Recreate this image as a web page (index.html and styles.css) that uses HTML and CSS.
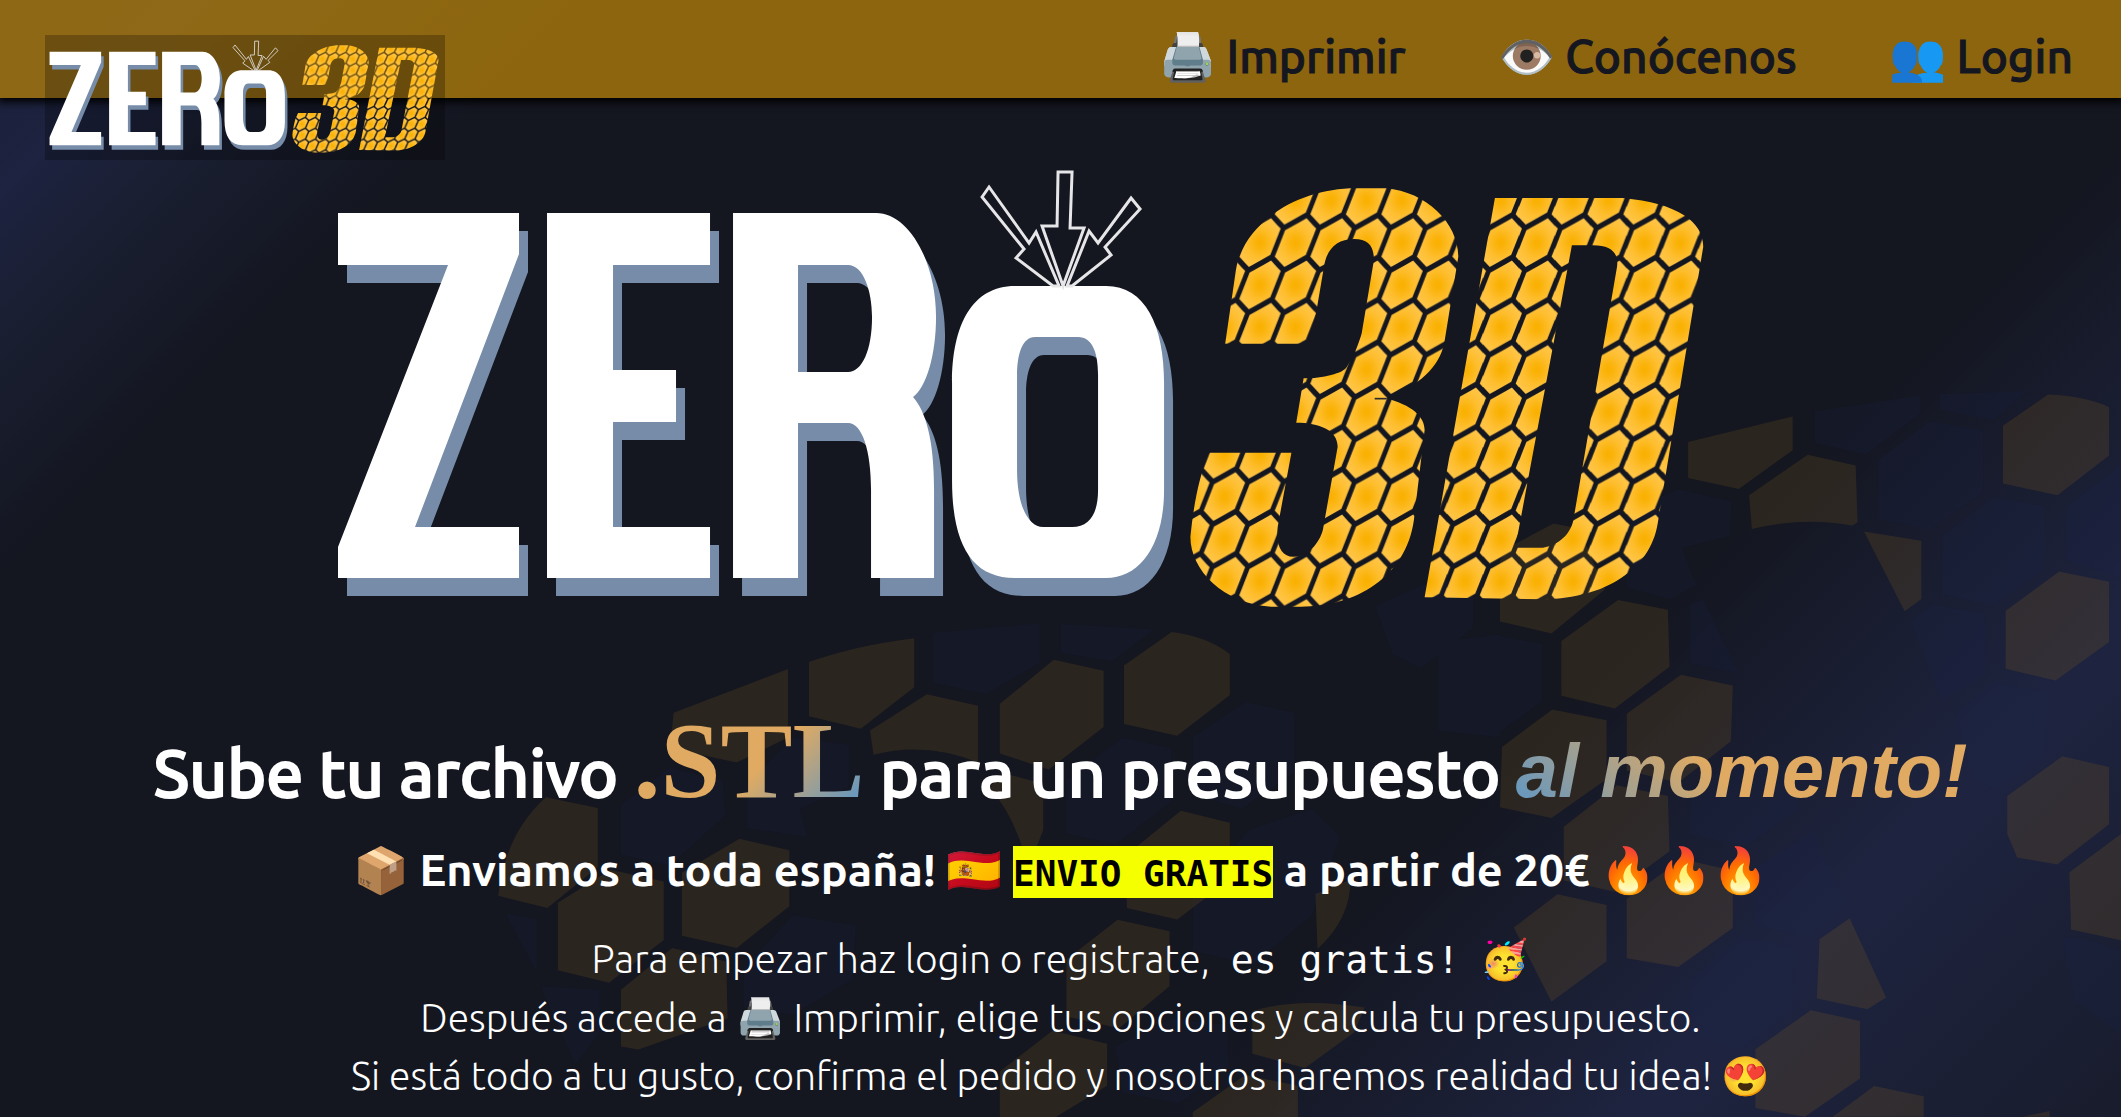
FILE: index.html
```html
<!DOCTYPE html>
<html lang="es">
<head>
<meta charset="utf-8">
<meta name="viewport" content="width=device-width, initial-scale=1">
<title>ZERo 3D</title>
<link rel="stylesheet" href="styles.css">
</head>
<body>
<svg class="backdrop" viewBox="0 0 2121 1117" preserveAspectRatio="xMidYMid slice" aria-hidden="true">
  <g class="cells-blue">
    <g transform="translate(1500 350) scale(.396 .489)">
      <path d="M795 125L1060 93V130L925 213L795 190ZM1110 90L1330 85L1245 142L1110 122ZM956 225L1085 145L1220 165V290L1085 368L956 345ZM1116 380L1245 300L1375 320V445L1245 522L1116 500ZM1430 320L1568 235V465L1430 430ZM320 330L450 285L585 310L580 380L460 405L495 480L430 510L320 485ZM480 520L515 510L600 660L480 640ZM0 585L105 600V720L0 780ZM1036 555L1090 520L1225 540V665L1115 715ZM1150 745L1250 680L1380 700V820L1245 900L1190 870ZM480 900L600 840L750 850V940L620 1015L480 990ZM645 1060L790 985L870 1135L780 1200L645 1175ZM480 1290L610 1200L740 1220V1350L610 1430L480 1400ZM1420 1200L1500 1210L1568 1230V1400L1450 1330Z"/>
    </g>
    <g transform="translate(400 560) scale(.7015 .3552)">
      <path d="M760 205L912 178V290L835 378L760 345ZM942 180L1075 195L1015 285L942 262ZM315 690L385 585L460 620L463 720L385 860L315 830ZM495 630L560 500L640 520V640L570 700L580 780L495 755ZM150 995L195 1010V1160ZM200 1200L285 1210V1330L250 1420ZM1130 500L1205 400L1275 430V600L1200 700L1130 660ZM950 620L1030 500L1100 530V680L1020 800L950 770ZM1130 950L1210 760L1300 700L1340 780L1300 1000L1215 1140L1130 1100ZM1390 130L1480 50L1530 90V190L1455 305L1415 265ZM1480 230L1568 210V500L1480 480ZM490 1150L560 1000L650 1030L645 1180L560 1280L490 1260ZM1020 1370L1100 1290L1180 1310V1430L1110 1530L1030 1500Z"/>
    </g>
  </g>
  <g class="cells-brown">
    <g transform="translate(1500 350) scale(.396 .489)">
      <path d="M475 188L739 136V205L603 284L475 262ZM629 297L777 214L898 236L903 352L890 359Q770 340 636 366ZM919 371L1064 390V509L1022 534ZM1270 155L1384 91Q1480 94 1538 117V216L1408 297L1270 273ZM1277 533L1412 453L1538 474V597L1403 676L1277 652ZM1281 912L1420 831L1538 853V970L1407 1052L1306 1038L1281 990ZM1438 1068L1568 990V1207L1442 1185ZM155 595L298 511L424 531L428 648L290 733L155 707ZM320 744L457 664L588 686L583 800L450 885L320 860ZM5 812L132 735L269 757V878L130 957L0 935ZM161 975L295 890L424 912L428 1025L290 1108L161 1085ZM320 1122L460 1041L588 1065V1182L450 1262L320 1244ZM35 1181L145 1113L269 1135V1250L130 1333ZM807 1205L883 1162L975 1324L928 1348L800 1326ZM645 1430L785 1350L909 1372V1490L770 1568L645 1550ZM840 1568L945 1505L1070 1526V1568ZM1320 1568L1388 1556V1568ZM30 400L135 355L200 365L265 490L130 580L0 555V430Z"/>
    </g>
    <g transform="translate(400 560) scale(.7015 .3552)">
      <path d="M390 430L553 307V500L480 570L385 530ZM583 287Q650 240 733 220V358L657 475L583 440ZM670 480L751 378L824 410V570Q750 510 675 548ZM855 405L932 281L1003 312V470L925 590L855 545ZM1032 297L1100 203Q1150 215 1183 265V380L1108 495L1032 462ZM208 668L282 698V865L210 980L140 945Q150 770 208 668ZM225 965L300 872L376 905V1070L298 1190L225 1155ZM402 880L484 785L555 817V975L480 1092L402 1058ZM388 1092L465 1130L467 1290L340 1378L315 1370V1210ZM860 600L917 630V760L895 870Q880 730 840 640ZM1113 706L1183 740V900L1108 1012L1036 980V830ZM1023 1013L1097 1045V1200L1025 1318L950 1285V1125ZM1305 940L1355 900Q1355 1010 1308 1095ZM1215 1270Q1280 1230 1375 1260L1360 1330L1290 1430L1215 1390ZM930 1325L1008 1362V1480L935 1568H855V1440ZM1130 1555L1205 1450L1280 1480V1568H1130Z"/>
    </g>
  </g>
</svg>

<svg class="defs" width="0" height="0" aria-hidden="true">
  <defs>
    <radialGradient id="amber">
      <stop offset="0" stop-color="#f9b000"/>
      <stop offset=".15" stop-color="#fab206"/>
      <stop offset=".65" stop-color="#febe30"/>
      <stop offset="1" stop-color="#ffc444"/>
    </radialGradient>
    <path id="cell" fill="url(#amber)" d="M30 -73L56 -42L28 37L-30 73L-56 42L-28 -37Z"/>
    <pattern id="comb3" patternUnits="userSpaceOnUse" x="222" y="312" width="96" height="127">
      <g id="tile">
        <use href="#cell" x="48" y="63"/>
        <use href="#cell" x="-48" y="63"/><use href="#cell" x="144" y="63"/>
        <use href="#cell" x="48" y="-64"/><use href="#cell" x="48" y="190"/>
        <use href="#cell" x="144" y="-64"/><use href="#cell" x="-48" y="190"/>
      </g>
    </pattern>
    <pattern id="combD" patternUnits="userSpaceOnUse" x="873" y="312" width="97" height="127">
      <use href="#tile"/>
    </pattern>
    <g id="zero" fill-rule="evenodd">
      <path d="M338 213H519V254L415 527H519V578H338V547L448 265H338Z"/>
      <path d="M547 213H710V265H613V370H676V422H613V527H710V578H547Z"/>
      <path d="M733 213H876C908 213 936 260 936 317C936 355 926 388 913 397C926 412 934 440 934 490V578H871V490C871 450 862 423 848 423H798V578H733ZM798 265V372H848C862 372 872 350 872 317C872 290 863 265 848 265Z"/>
      <path d="M1015 286H1106C1145 286 1164 325 1164 383V490C1164 545 1140 578 1106 578H1015C972 578 952 545 952 480V383C952 325 972 286 1015 286ZM1035 337C1022 337 1017 355 1017 375V470C1017 505 1028 527 1043 527H1072C1090 527 1098 513 1098 490V375C1098 352 1092 337 1078 337Z"/>
    </g>
    <g id="logo">
      <use href="#zero" x="9" y="18" fill="#768ca9"/>
      <use href="#zero" fill="#fff"/>
      <path fill="none" stroke="#e6e6e8" stroke-width="3" d="M1058 172H1072L1070 228H1084L1063 286L1042 226H1057ZM982 197L989 187L1029 243L1036 232L1059 286H1053L1016 258L1024 249ZM1131 198L1140 209L1105 247L1111 255L1072 286H1067L1089 231L1098 243Z"/>
      <g transform="translate(1160 160) scale(.37 .3333)" fill-rule="evenodd">
        <path fill="url(#comb3)" d="M176 551L205 330C225 190 370 85 530 85H610C720 95 806 190 806 290L768 550C755 620 700 680 610 715C680 735 715 770 715 810L686 1080C665 1250 530 1340 380 1340H300C170 1330 82 1230 82 1130C90 1040 105 950 132 878H355L318 1100C312 1160 330 1190 360 1190C400 1190 430 1150 440 1110L480 860C480 810 430 788 368 788L388 655C440 655 495 640 505 620C525 590 540 540 545 520L578 300C578 255 560 237 525 237C475 237 450 270 443 320L420 470L395 551Z"/>
        <path fill="url(#combD)" d="M905 114H1250C1400 130 1468 185 1468 260L1345 1090C1325 1230 1200 1315 1040 1318L715 1312ZM1113 256L960 1163H1035C1080 1155 1110 1120 1117 1080L1235 320C1240 280 1220 256 1170 256Z"/>
        <path stroke="#2b2a2a" stroke-width="5" d="M580 716H612"/>
      </g>
    </g>
  </defs>
</svg>

<header class="topbar">
  <a class="brand" href="#" aria-label="ZERo 3D">
    <svg class="brand-logo" viewBox="322 148 1404 488" preserveAspectRatio="none" aria-hidden="true"><use href="#logo"/></svg>
  </a>
  <nav class="menu">
    <a href="#imprimir">🖨️ Imprimir</a>
    <a href="#conocenos">👁️ Conócenos</a>
    <a href="#login">👥 Login</a>
  </nav>
</header>

<main class="hero">
  <svg class="hero-logo" viewBox="322 148 1404 488" role="img" aria-label="ZERo 3D"><use href="#logo"/></svg>
  <h1 class="headline">Sube tu archivo <span class="stl">.STL</span> para un presupuesto <em class="now">al momento!</em></h1>
  <h2 class="shipping">📦 Enviamos a toda españa! 🇪🇸 <mark>ENVIO GRATIS</mark> a partir de 20€ 🔥🔥🔥</h2>
  <p class="steps">Para empezar haz login o registrate, <code>es gratis!</code> 🥳<br>
  Después accede a 🖨️ Imprimir, elige tus opciones y calcula tu presupuesto.<br>
  Si está todo a tu gusto, confirma el pedido y nosotros haremos realidad tu idea! 😍</p>
</main>
</body>
</html>
```
FILE: styles.css
```css
* {
  box-sizing: border-box;
}

body {
  margin: 0;
  min-height: 100vh;
  overflow-x: hidden;
  position: relative;
  background: linear-gradient(135deg, #1b2038 0%, #1d2340 6%, #191e30 11%, #141620 18%, #141620 70%, #1e2440 85%, #181c2c 100%);
  color: #fff;
  font-family: Ubuntu, "Noto Sans", sans-serif;
}

.backdrop {
  position: absolute;
  inset: 0;
  width: 100%;
  height: 100%;
  z-index: -1;
}

.defs {
  position: absolute;
}

.cells-blue {
  fill: rgba(27, 35, 79, 0.16);
}

.cells-brown {
  fill: rgba(130, 95, 28, 0.21);
}

.topbar {
  display: flex;
  justify-content: space-between;
  align-items: flex-start;
  height: 98px;
  padding: 0 48px 0 45px;
  background: rgba(184, 130, 10, 0.74);
  box-shadow: 0 2px 8px 2px #000;
}

.brand {
  display: block;
  margin-top: 35px;
  background: rgba(0, 0, 0, 0.25);
}

.brand-logo {
  display: block;
  width: 400px;
  height: 125px;
}

.menu {
  display: flex;
  gap: 92px;
  padding-top: 24px;
}

.menu a {
  color: #141620;
  font-size: 46px;
  font-weight: 500;
  line-height: 64px;
  text-decoration: none;
  white-space: nowrap;
  -webkit-text-stroke: 1px #141620;
}

.hero {
  text-align: center;
}

.hero-logo {
  display: block;
  width: 66.2%;
  margin: 50px 0 0 15.2%;
}

.headline {
  margin: 62px 0 0;
  font-size: 66px;
  font-weight: 500;
  line-height: 148px;
  white-space: nowrap;
  -webkit-text-stroke: 2px #fff;
}

.stl,
.now {
  line-height: 1;
  background-clip: text;
  -webkit-background-clip: text;
  color: transparent;
  -webkit-text-stroke: 0;
}

.stl {
  font-family: "Liberation Serif", serif;
  font-size: 108px;
  font-weight: 700;
  background-image: linear-gradient(135deg, #e0aa62 55%, #6b98bb 90%);
}

.now {
  font-family: "Liberation Sans", sans-serif;
  font-size: 76px;
  font-weight: 700;
  background-image: linear-gradient(45deg, #6b98bb 5%, #e0aa62 45%);
}

.shipping {
  margin: -6px 0 0;
  font-size: 45px;
  font-weight: 700;
  line-height: 60px;
}

mark {
  padding: 7px 0 4px;
  background: #f6ff00;
  color: #000;
  font-family: "DejaVu Sans Mono", monospace;
  font-size: 36px;
}

.steps {
  margin: 26px 0 0;
  font-size: 39px;
  font-weight: 300;
  line-height: 58px;
}

code {
  padding: 0 12px;
  font-family: "DejaVu Sans Mono", monospace;
  font-size: 38px;
}
```
